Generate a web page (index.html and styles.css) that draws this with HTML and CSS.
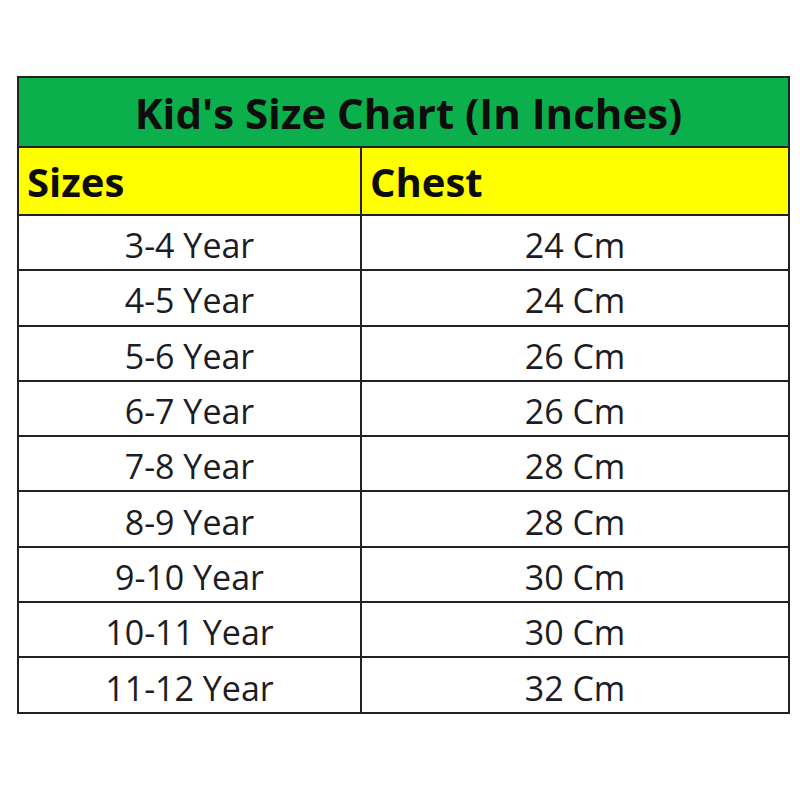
FILE: index.html
```html
<!DOCTYPE html>
<html>
<head>
<meta charset="utf-8">
<link rel="stylesheet" href="styles.css">
</head>
<body>
<div class="page">
<table class="chart">
<colgroup><col class="col1"><col class="col2"></colgroup>
<thead>
<tr class="title-row"><th colspan="2">Kid's Size Chart (In Inches)</th></tr>
<tr class="head-row"><th>Sizes</th><th>Chest</th></tr>
</thead>
<tbody>
<tr><td>3-4 Year</td><td>24 Cm</td></tr>
<tr><td>4-5 Year</td><td>24 Cm</td></tr>
<tr><td>5-6 Year</td><td>26 Cm</td></tr>
<tr><td>6-7 Year</td><td>26 Cm</td></tr>
<tr><td>7-8 Year</td><td>28 Cm</td></tr>
<tr><td>8-9 Year</td><td>28 Cm</td></tr>
<tr><td>9-10 Year</td><td>30 Cm</td></tr>
<tr><td>10-11 Year</td><td>30 Cm</td></tr>
<tr><td>11-12 Year</td><td>32 Cm</td></tr>
</tbody>
</table>
</div>
</body>
</html>
```
FILE: styles.css
```css
html, body {
  margin: 0;
  padding: 0;
  background: #ffffff;
}
.page {
  width: 800px;
  height: 800px;
  padding: 76px 0 0 17px;
  box-sizing: border-box;
}
.chart {
  border-collapse: collapse;
  width: 771px;
  table-layout: fixed;
  font-family: "Open Sans", "Liberation Sans", sans-serif;
  color: #1c1c24;
}
.col1 {
  width: 343px;
}
.col2 {
  width: 428px;
}
.chart th, .chart td {
  border: 2px solid #222222;
  padding: 0;
  line-height: 1;
}
.title-row th {
  background: #0bb04c;
  height: 66px;
  font-size: 42px;
  font-weight: 700;
  text-align: center;
  color: #0d0d0d;
  padding-left: 10px;
  padding-top: 2px;
}
.head-row th {
  background: #ffff00;
  height: 64px;
  font-size: 40px;
  font-weight: 700;
  text-align: left;
  color: #0d0d0d;
  padding-left: 8px;
  padding-top: 2px;
}
.chart td {
  height: 48.3px;
  font-size: 34px;
  text-align: center;
  padding-top: 5px;
}
```
